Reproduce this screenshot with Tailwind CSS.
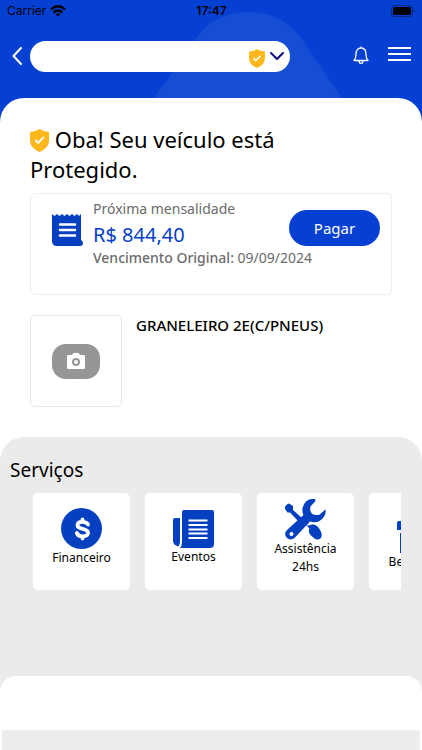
<!DOCTYPE html>
<html lang="pt-BR">
<head>
    <meta charset="UTF-8">
    <meta name="viewport" content="width=device-width, initial-scale=1.0">
    <title>Proteção Veicular</title>
    <script src="https://cdn.jsdelivr.net/npm/@tailwindcss/browser@4"></script>
</head>
<body class="min-h-screen flex flex-col bg-[#0540d2] font-['Noto_Sans','Open_Sans',sans-serif] text-black">
    <!-- Header -->
    <header class="relative">
        <svg class="absolute bottom-0 left-[154px] w-[188px] h-[86px]" viewBox="0 0 188 86" fill="#154dd4" aria-hidden="true">
            <path d="M0 86 44 24Q62 0 95 0Q128 0 147 26L188 86Z"/>
        </svg>

        <!-- Status bar -->
        <div class="relative grid grid-cols-3 items-center h-[22px] pl-[7px] pr-[6px] font-['Inter','Liberation_Sans',sans-serif] text-xs">
            <div class="flex items-center gap-1">
                <span>Carrier</span>
                <svg class="w-4 h-3" viewBox="0 0 16 12" fill="none" stroke="#000" stroke-width="2.400" aria-hidden="true">
                    <path d="M1 4.400Q8 -1.800 15 4.400M3.500 7.600Q8 3.600 12.500 7.600"/>
                    <path d="M8 11.600 5.500 9.100Q8 7.200 10.500 9.100Z" fill="#000" stroke="none"/>
                </svg>
            </div>
            <span class="text-center font-semibold">17:47</span>
            <svg class="justify-self-end w-[25px] h-3" viewBox="0 0 25 12" aria-hidden="true">
                <rect x=".5" y=".5" width="21" height="11" rx="3" fill="none" stroke="#000" stroke-opacity=".4"/>
                <rect x="2" y="2" width="18" height="8" rx="1.500"/>
                <path d="M23 4Q25 6 23 8Z" fill-opacity=".4"/>
            </svg>
        </div>

        <div class="relative flex items-center h-[76px] pl-3 pr-[11px] pb-2">
            <button type="button" aria-label="Voltar" class="mr-2">
                <svg class="w-[10px] h-[18px]" viewBox="0 0 10 18" fill="none" stroke="#fff" stroke-width="2">
                    <path d="M9 1 1.500 9 9 17" stroke-linecap="round"/>
                </svg>
            </button>
            <button type="button" aria-label="Selecionar veículo" class="flex flex-1 items-center justify-end gap-[5px] h-[31px] pr-[6px] rounded-full bg-white">
                <svg class="w-4 h-[19px] mt-1" viewBox="0 0 20 24">
                    <path d="M10 0Q14 2.800 20 3V12Q20 20 10 24Q0 20 0 12V3Q6 2.800 10 0Z" fill="#ffb81c"/>
                    <path d="M5.500 11.500 8.500 14.500 14.500 8.500" fill="none" stroke="#fff" stroke-width="2"/>
                </svg>
                <svg class="w-[14px] h-2" viewBox="0 0 14 8" fill="none" stroke="#0a0a80" stroke-width="2">
                    <path d="M1 1 7 7 13 1" stroke-linecap="round"/>
                </svg>
            </button>
            <button type="button" aria-label="Notificações" class="ml-[63px] mb-[2px]">
                <svg class="w-4 h-[18px]" viewBox="0 0 16 18" fill="none" stroke="#fff" stroke-linejoin="round">
                    <path d="M1 14.500Q3 12 3 8.500C3 4.500 5 2 8 2S13 4.500 13 8.500Q13 12 15 14.500ZM8 .5V2M6 15Q6 17.300 8 17.300T10 15" stroke-width="1.300"/>
                </svg>
            </button>
            <button type="button" aria-label="Menu" class="ml-[19px] mb-1">
                <svg class="w-[23px] h-[14px]" viewBox="0 0 23 14" fill="#fff">
                    <path d="M0 0H23V2H0ZM0 6H23V8H0ZM0 12H23V14H0Z"/>
                </svg>
            </button>
        </div>
    </header>

    <main class="flex flex-1 flex-col rounded-t-3xl bg-white overflow-hidden">
        <div class="px-[30px] pt-[26px] pb-[30px]">
            <h1 class="text-[22px] leading-[30px]">
                <svg class="inline-block align-[-4px] w-[19px] h-[23px]" viewBox="0 0 20 24" aria-hidden="true">
                    <path d="M10 0Q14 2.800 20 3V12Q20 20 10 24Q0 20 0 12V3Q6 2.800 10 0Z" fill="#ffb81c"/>
                    <path d="M5.500 11.500 8.500 14.500 14.500 8.500" fill="none" stroke="#fff" stroke-width="2"/>
                </svg>
                Oba! Seu veículo está<br>Protegido.
            </h1>

            <!-- Next payment -->
            <section class="relative flex items-start h-[102px] mt-[9px] pl-[21px] pt-1 border border-[#eeeeee] rounded-[5px] text-[#6b6b6b]">
                <svg class="w-[31px] h-8 mt-4 mr-[10px]" viewBox="0 0 31 32" aria-hidden="true">
                    <path d="M0 0 2.500 2 5 0 7.500 2 10 0 12.500 2 15 0 17.500 2 20 0 22.500 2 25 0 27 2 29 0V26Q31 27 31 29Q31 32 28 32H5Q0 32 0 27Z" fill="#0540c0"/>
                    <path d="M8 10.500H23M8 16H23M8 21.500H23" stroke="#fff" stroke-width="2.500" stroke-linecap="round"/>
                </svg>
                <div>
                    <p class="text-sm leading-[22px]">Próxima mensalidade</p>
                    <p class="text-xl leading-[30px] text-[#0540c8]">R$ 844,40</p>
                    <p class="text-sm leading-4"><span class="font-medium">Vencimento Original:</span> 09/09/2024</p>
                </div>
                <button type="button" class="absolute top-4 right-[11px] w-[91px] h-9 rounded-full bg-[#0540d2] text-[15px] text-white">Pagar</button>
            </section>

            <!-- Vehicle -->
            <section class="flex items-start gap-[14px] mt-5">
                <button type="button" aria-label="Foto do veículo" class="flex items-center justify-center size-[92px] border border-[#e6e6f4] rounded-[5px]">
                    <span class="flex items-center justify-center w-12 h-[35px] rounded-[14px] bg-[#969696]">
                        <svg class="w-[18px] h-4" viewBox="0 0 18 16">
                            <path d="M1 2H5L6.500 0H11.500L13 2H17Q18 2 18 3V15Q18 16 17 16H1Q0 16 0 15V3Q0 2 1 2Z" fill="#fff"/>
                            <circle cx="9" cy="9" r="3" fill="#fff" stroke="#969696" stroke-width="2"/>
                        </svg>
                    </span>
                </button>
                <h2 class="text-[15px] leading-5 font-medium">GRANELEIRO 2E(C/PNEUS)</h2>
            </section>
        </div>

        <!-- Services -->
        <section class="flex flex-1 flex-col rounded-t-3xl bg-[#ebebeb]">
            <h2 class="pt-5 pl-[10px] text-[19px] leading-[26px]">Serviços</h2>
            <div class="flex gap-[15px] mt-[10px] ml-[33px] mr-[21px] overflow-hidden text-xs leading-[18px] text-center">
                <a href="#" class="flex flex-col items-center justify-center shrink-0 size-[97px] rounded-[5px] bg-white pb-2">
                    <svg class="size-[41px]" viewBox="0 0 41 41" aria-hidden="true">
                        <circle cx="20.500" cy="20.500" r="20.500" fill="#0540c0"/>
                        <path d="M27 16.500C26 14.500 24 13.800 21.500 13.800C18 13.800 16.500 15.300 16.500 17.200C16.500 22.500 27 19 27 24.800C27 27 25 28.300 21.500 28.300C18.500 28.300 16.500 27 15.800 25M21.500 11.500V13.500M21.500 28.500V30.500" fill="none" stroke="#fff" stroke-width="3.800" stroke-linecap="round"/>
                    </svg>
                    Financeiro
                </a>
                <a href="#" class="flex flex-col items-center justify-center shrink-0 size-[97px] rounded-[5px] bg-white pb-2">
                    <svg class="w-[41px] h-[38px]" viewBox="0 0 41 38" aria-hidden="true">
                        <path d="M11 0H39Q41 0 41 2V34Q41 38 37 38H7Q9 36 9 32V2Q9 0 11 0ZM2 8H7V32Q7 34 5.500 36.500Q0 35 0 31V10Q0 8 2 8Z" fill="#0540c0"/>
                        <path d="M15.500 10.500H34.500M15.500 15H34.500M15.500 19.500H34.500M15.500 23.500H34.500M15.500 28H34.500" stroke="#fff" stroke-width="2"/>
                    </svg>
                    Eventos
                </a>
                <a href="#" class="flex flex-col items-center justify-center shrink-0 size-[97px] rounded-[5px] bg-white pb-2">
                    <svg class="w-[41px] h-[41px]" viewBox="0 0 41 41" fill="#0540c0" aria-hidden="true">
                        <path d="M0 7.500 2.500 5 4 4.500 8 7V11L17 19 13 22 5 13.500H2.500L0 10Z"/>
                        <path d="M22 27 27 25.500Q32 25 35 31Q38 35 36 39Q32 42 29 39Q22 34 24.500 29.500L20 25 23 22Z"/>
                        <path d="M30 0Q20-1 17.500 9Q17 13 18.500 16L2 31Q-1.500 34.500 1.500 38.500Q5.500 42 9.500 39L25 22.500Q33 25 38 19Q41.500 15 40.500 10.500L34 16Q27 16 26.500 14Q24.500 12 25.500 7.500L30.500 2Z"/>
                        <circle cx="6.500" cy="35" r="2" fill="#fff"/>
                    </svg>
                    Assistência<br>24hs
                </a>
                <a href="#" class="flex flex-col items-center justify-center shrink-0 size-[97px] rounded-[5px] bg-white pt-2">
                    <svg class="w-[41px] h-8" viewBox="0 0 41 32" fill="#0540c0" aria-hidden="true">
                        <path d="M2 0H39Q41 0 41 2V9H0V2Q0 0 2 0ZM3 12H38V32H3Z"/>
                    </svg>
                    Benefícios
                </a>
            </div>

            <footer class="flex flex-1 flex-col mt-[86px] pt-[54px] px-[2px] rounded-t-2xl bg-white">
                <div class="flex-1 min-h-5 rounded-t-[2px] bg-[#ededed]"></div>
            </footer>
        </section>
    </main>
</body>
</html>
